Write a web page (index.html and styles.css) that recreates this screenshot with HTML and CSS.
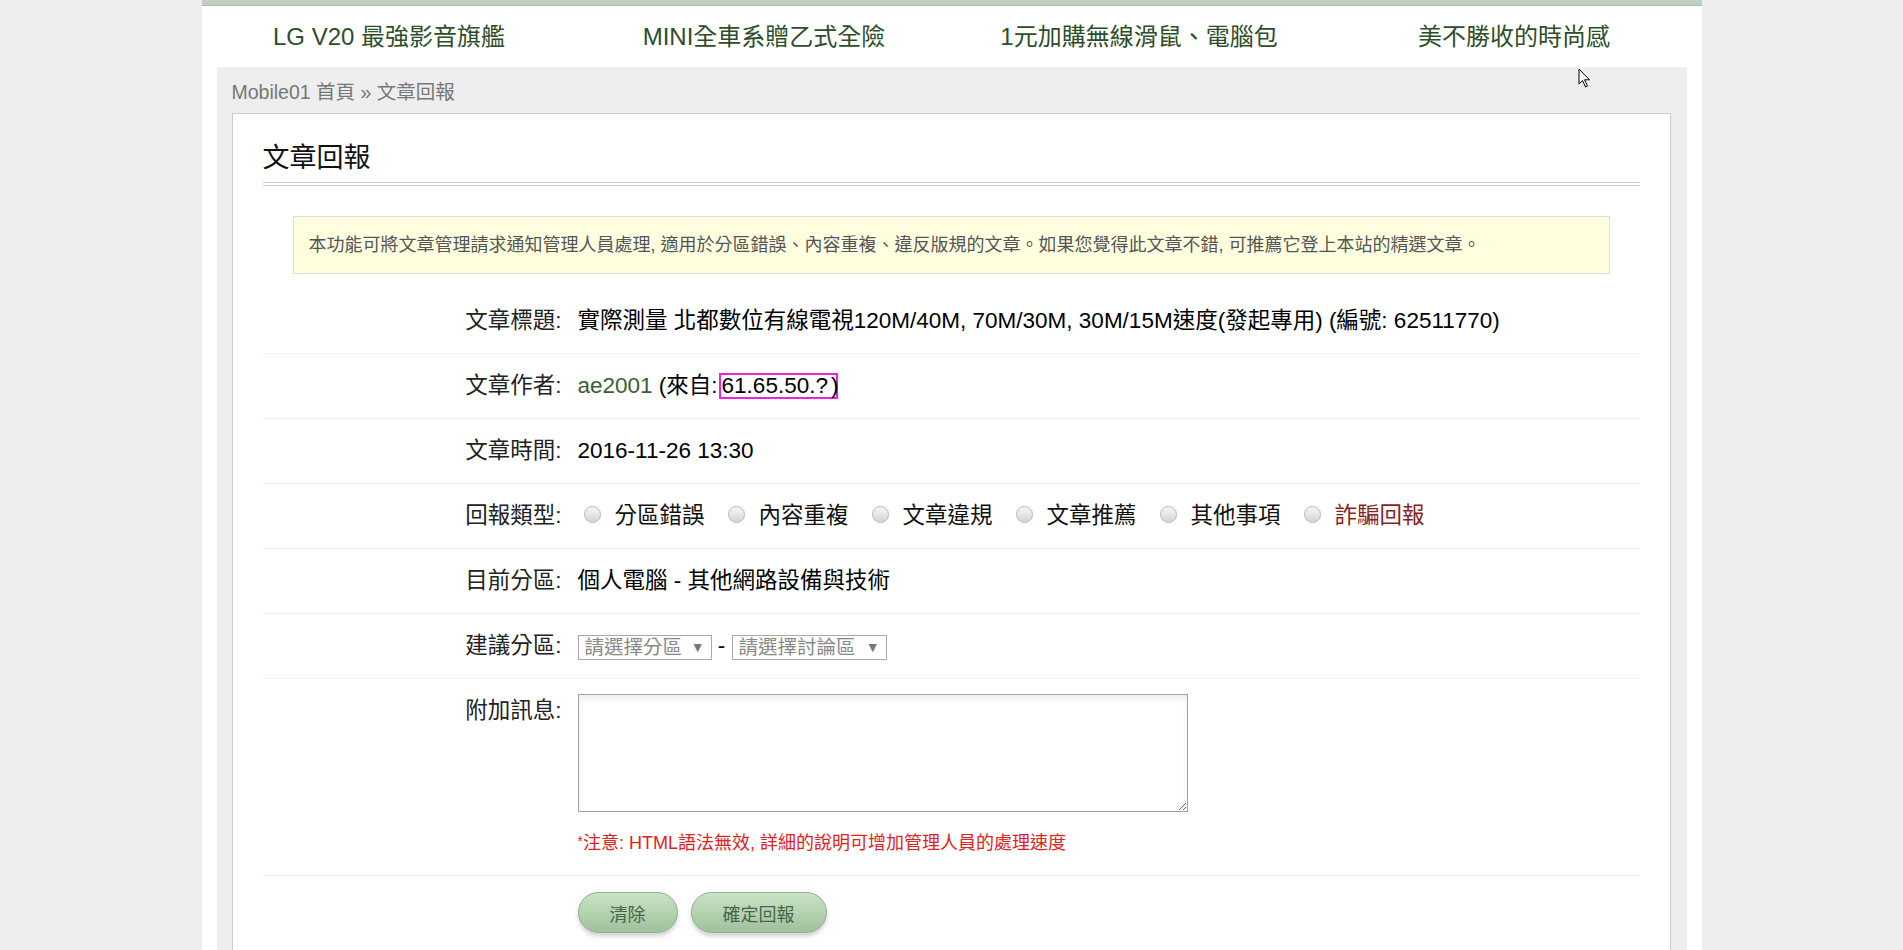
FILE: index.html
```html
<!DOCTYPE html>
<html lang="zh-Hant">
<head>
  <meta charset="UTF-8">
  <title>文章回報 - Mobile01</title>
  <link rel="stylesheet" href="styles.css">
</head>
<body>

<div class="page">
  <div class="top-bar"></div>

  <ul class="promo-links">
    <li><a href="#">LG V20 最強影音旗艦</a></li>
    <li><a href="#">MINI全車系贈乙式全險</a></li>
    <li><a href="#">1元加購無線滑鼠、電腦包</a></li>
    <li><a href="#">美不勝收的時尚感</a></li>
  </ul>

  <div class="main-area">
    <div class="crumb"><a href="#">Mobile01 首頁</a> » 文章回報</div>

    <div class="card">
      <h2 class="card-title">文章回報</h2>

      <div class="notice">本功能可將文章管理請求通知管理人員處理, 適用於分區錯誤、內容重複、違反版規的文章。如果您覺得此文章不錯, 可推薦它登上本站的精選文章。</div>

      <div class="form-row">
        <div class="form-label">文章標題:</div>
        <div class="form-value">實際測量 北都數位有線電視120M/40M, 70M/30M, 30M/15M速度(發起專用) (編號: 62511770)</div>
      </div>

      <div class="form-row">
        <div class="form-label">文章作者:</div>
        <div class="form-value"><a href="#" class="author">ae2001</a> (來自:<span class="ip-mark">61.65.50.?</span><span class="ip-close">)</span></div>
      </div>

      <div class="form-row">
        <div class="form-label">文章時間:</div>
        <div class="form-value">2016-11-26 13:30</div>
      </div>

      <div class="form-row">
        <div class="form-label">回報類型:</div>
        <div class="form-value radio-group">
          <label class="option"><input type="radio" name="reportType">分區錯誤</label>
          <label class="option"><input type="radio" name="reportType">內容重複</label>
          <label class="option"><input type="radio" name="reportType">文章違規</label>
          <label class="option"><input type="radio" name="reportType">文章推薦</label>
          <label class="option"><input type="radio" name="reportType">其他事項</label>
          <label class="option option-fraud"><input type="radio" name="reportType">詐騙回報</label>
        </div>
      </div>

      <div class="form-row">
        <div class="form-label">目前分區:</div>
        <div class="form-value">個人電腦 - 其他網路設備與技術</div>
      </div>

      <div class="form-row">
        <div class="form-label">建議分區:</div>
        <div class="form-value">
          <span class="select-wrap"><select class="select-zone"><option>請選擇分區</option></select></span> - <span class="select-wrap"><select class="select-forum"><option>請選擇討論區</option></select></span>
        </div>
      </div>

      <div class="form-row">
        <div class="form-label">附加訊息:</div>
        <div class="form-value">
          <textarea class="message"></textarea>
          <div class="note"><span class="star">*</span>注意: HTML語法無效, 詳細的說明可增加管理人員的處理速度</div>
        </div>
      </div>

      <div class="form-row form-actions">
        <div class="form-label"></div>
        <div class="form-value button-group">
          <button class="pill-button">清除</button>
          <button class="pill-button">確定回報</button>
        </div>
      </div>
    </div>
  </div>
</div>

<svg class="mouse-cursor" width="14" height="21" viewBox="0 0 14 21">
  <path d="M1 1 L1 16 L4.5 12.5 L7.5 19 L9.5 18 L6.5 11.8 L11.5 11.8 Z" fill="#fff" stroke="#000" stroke-width="1"/>
</svg>

</body>
</html>
```

FILE: styles.css
```css
html, body {
  overflow: hidden;
}

body {
  margin: 0;
  background-color: #ededed;
  font-family: "Liberation Sans", "Noto Sans CJK TC", sans-serif;
  color: #111;
}

a {
  text-decoration: none;
}

.page {
  width: 1500px;
  margin: 0 auto;
  min-height: 100vh;
  background-color: #fff;
}

.top-bar {
  height: 5px;
  background-color: #bdd1bd;
  border-bottom: 1px solid #a9bea9;
}

.promo-links {
  list-style: none;
  margin: 0;
  padding: 0;
  display: grid;
  grid-template-columns: repeat(4, 1fr);
  height: 61px;
}

.promo-links li {
  text-align: center;
  line-height: 61px;
  font-size: 24px;
}

.promo-links a {
  color: #2e4d2a;
}

.main-area {
  margin: 0 15px;
  padding: 12px 16px 0 15px;
  background-color: #eee;
  min-height: 900px;
}

.crumb {
  font-size: 19.5px;
  line-height: 26px;
  color: #777;
  margin-bottom: 8px;
}

.crumb a {
  color: #777;
}

.card {
  background-color: #fff;
  border: 1px solid #ccc;
  border-bottom: none;
  padding: 0 30px;
  min-height: 900px;
}

.card-title {
  margin: 0;
  padding: 26px 0 6px;
  font-size: 27px;
  line-height: 36px;
  font-weight: normal;
  color: #111;
  border-bottom: 4px double #ccc;
}

.notice {
  margin: 30px 30px 15px;
  padding: 15px;
  border: 1px solid #ddd;
  background-color: #ffffe0;
  font-size: 18px;
  line-height: 26px;
  color: #555;
}

.form-row {
  display: grid;
  grid-template-columns: 299px 1fr;
  column-gap: 16px;
  padding: 15px 0;
  border-bottom: 1px solid #eee;
  font-size: 22.5px;
  line-height: 34px;
}

.form-label {
  text-align: right;
  color: #222;
}

.form-value {
  color: #000;
}

.author {
  color: #3a5e32;
}

.ip-mark {
  display: inline-block;
  line-height: 22px;
  border: 2px solid #ee22dd;
  padding: 0 8px 0 1px;
  margin-left: 1px;
}

.ip-close {
  margin-left: -7px;
}

.radio-group {
  display: flex;
  align-items: center;
}

.option {
  display: inline-flex;
  align-items: center;
  margin-right: 17px;
  color: #111;
}

.option input {
  appearance: none;
  flex: none;
  width: 17px;
  height: 17px;
  margin: 0 14px 4px 6px;
  border: 1px solid #b8b8b8;
  border-radius: 50%;
  background: linear-gradient(#f7f7f7, #d4d4d4);
}

.option-fraud {
  color: #8a1f1f;
}

.select-wrap {
  position: relative;
  display: inline-block;
  vertical-align: middle;
}

.select-wrap::after {
  content: "▼";
  position: absolute;
  right: 7px;
  top: 4px;
  font-size: 14px;
  line-height: 17px;
  color: #777;
  pointer-events: none;
}

.select-wrap select {
  appearance: none;
  height: 25px;
  padding: 0 20px 0 6px;
  border: 1px solid #aaa;
  border-radius: 0;
  background-color: #fff;
  font-family: "Liberation Sans", "Noto Sans CJK TC", sans-serif;
  font-size: 19.5px;
  color: #888;
  display: block;
}

.select-zone {
  width: 134px;
}

.select-forum {
  width: 155px;
}

.message {
  display: block;
  box-sizing: border-box;
  width: 610px;
  height: 118px;
  border: 1px solid #a3a3a3;
  box-shadow: inset 0 4px 6px rgba(0, 0, 0, 0.07);
  font-size: 16px;
}

.note {
  margin-top: 12px;
  font-size: 18px;
  color: #e02222;
}

.star {
  font-size: 14px;
  vertical-align: 3px;
}

.form-actions {
  padding: 16px 0;
  border-bottom: none;
}

.button-group {
  display: flex;
  gap: 13px;
}

.pill-button {
  height: 41px;
  padding: 0 31px;
  border: 1px solid #8eb08b;
  border-radius: 21px;
  background: linear-gradient(#c9e3c5, #a0c19d);
  box-shadow: 0 3px 4px rgba(0, 0, 0, 0.18);
  font-family: "Liberation Sans", "Noto Sans CJK TC", sans-serif;
  font-size: 18px;
  color: #4a664a;
  cursor: pointer;
}

.mouse-cursor {
  position: absolute;
  left: 1578px;
  top: 68px;
}
```
